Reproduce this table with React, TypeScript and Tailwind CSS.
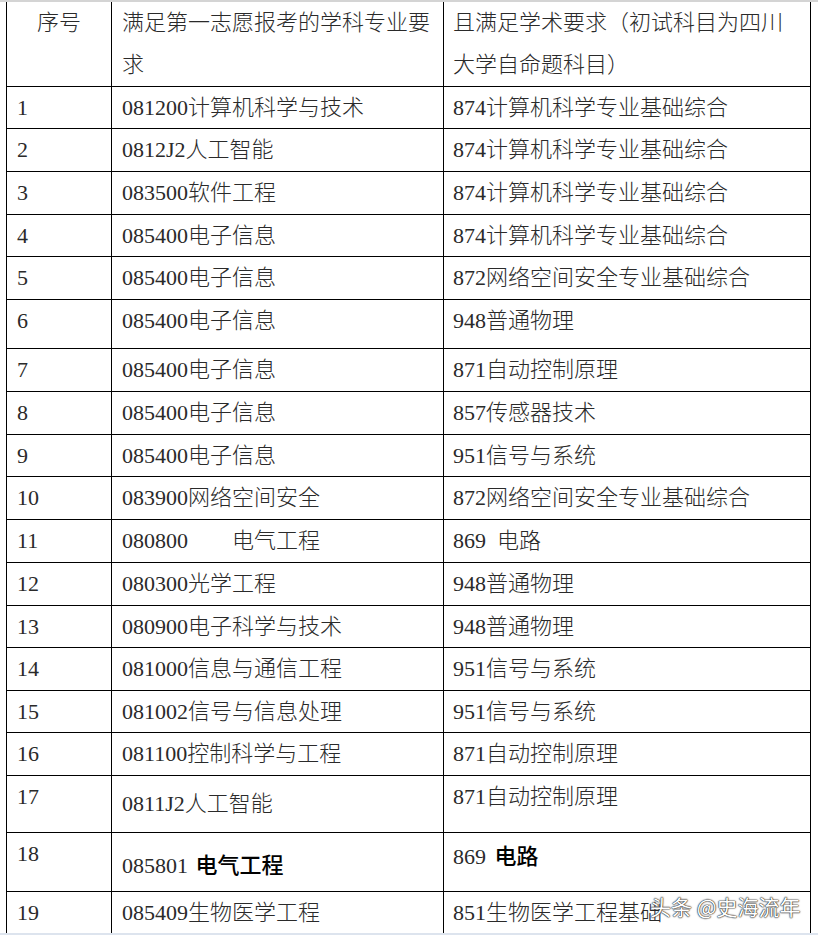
import React from 'react';

type Row = {
  no: string;
  major: React.ReactNode;
  exam: React.ReactNode;
  h: string;
  majorPad?: string;
};

const rows: Row[] = [
  { no: '1', major: '081200计算机科学与技术', exam: '874计算机科学专业基础综合', h: 'h-[42px]' },
  { no: '2', major: '0812J2人工智能', exam: '874计算机科学专业基础综合', h: 'h-[43px]' },
  { no: '3', major: '083500软件工程', exam: '874计算机科学专业基础综合', h: 'h-[43px]' },
  { no: '4', major: '085400电子信息', exam: '874计算机科学专业基础综合', h: 'h-[42px]' },
  { no: '5', major: '085400电子信息', exam: '872网络空间安全专业基础综合', h: 'h-[43px]' },
  { no: '6', major: '085400电子信息', exam: '948普通物理', h: 'h-[49px]' },
  { no: '7', major: '085400电子信息', exam: '871自动控制原理', h: 'h-[43px]' },
  { no: '8', major: '085400电子信息', exam: '857传感器技术', h: 'h-[43px]' },
  { no: '9', major: '085400电子信息', exam: '951信号与系统', h: 'h-[42px]' },
  { no: '10', major: '083900网络空间安全', exam: '872网络空间安全专业基础综合', h: 'h-[43px]' },
  { no: '11', major: '080800\u3000\u3000电气工程', exam: '869  电路', h: 'h-[43px]' },
  { no: '12', major: '080300光学工程', exam: '948普通物理', h: 'h-[43px]' },
  { no: '13', major: '080900电子科学与技术', exam: '948普通物理', h: 'h-[42px]' },
  { no: '14', major: '081000信息与通信工程', exam: '951信号与系统', h: 'h-[43px]' },
  { no: '15', major: '081002信号与信息处理', exam: '951信号与系统', h: 'h-[42px]' },
  { no: '16', major: '081100控制科学与工程', exam: '871自动控制原理', h: 'h-[43px]' },
  { no: '17', major: '0811J2人工智能', exam: '871自动控制原理', h: 'h-[57px]', majorPad: 'pt-[7px]' },
  {
    no: '18',
    major: (
      <>
        085801{' '}
        <span className="ml-[2px] font-['Noto_Sans_CJK_SC',sans-serif] text-[22px] font-medium text-black">电气工程</span>
      </>
    ),
    exam: (
      <>
        869{' '}
        <span className="ml-[3px] font-['Noto_Sans_CJK_SC',sans-serif] text-[22px] font-medium text-black">电路</span>
      </>
    ),
    h: 'h-[59px]',
    majorPad: 'pt-[9px]',
  },
  { no: '19', major: '085409生物医学工程', exam: '851生物医学工程基础', h: 'h-[60px]' },
];

const cols = 'grid grid-cols-[105px_332px_367px]';

export default function App() {
  return (
    <div className="relative flex h-[935px] w-[818px] flex-col overflow-hidden bg-white font-['Liberation_Serif','Noto_Sans_CJK_SC',serif] text-[22px] font-light leading-[42px] text-[#2a2a2a]">
      <div className="h-[2px] shrink-0 bg-[#d4d4d4]" />

      <div className="ml-[6px] w-[805px] flex-1 overflow-hidden border-l border-black">
        {/* 表头 */}
        <div className={`${cols} h-[85px] border-b border-black`}>
          <div className="border-r border-black text-center">序号</div>
          <div className="border-r border-black pl-[10px] pr-[2px]">满足第一志愿报考的学科专业要求</div>
          <div className="border-r border-black pl-[9px] pr-[20px]">且满足学术要求（初试科目为四川大学自命题科目）</div>
        </div>

        {rows.map((r) => (
          <div key={r.no} className={`${cols} ${r.h} border-b border-black`}>
            <div className="border-r border-black pl-[10px]">{r.no}</div>
            <div className={`whitespace-pre border-r border-black pl-[10px] ${r.majorPad ?? ''}`}>{r.major}</div>
            <div className="whitespace-pre border-r border-black pl-[9px]">{r.exam}</div>
          </div>
        ))}
      </div>

      <div className="h-[2px] shrink-0 bg-[#dde4ee]" />

      {/* 水印 */}
      <div className="absolute left-[650px] top-[892px] font-['Noto_Sans_CJK_SC',sans-serif] text-[21px] font-normal leading-[28px] text-white [text-shadow:0_0_1px_#222,0_0_1px_#222,0_0_2px_#444]">
        头条 @史海流年
      </div>
    </div>
  );
}
